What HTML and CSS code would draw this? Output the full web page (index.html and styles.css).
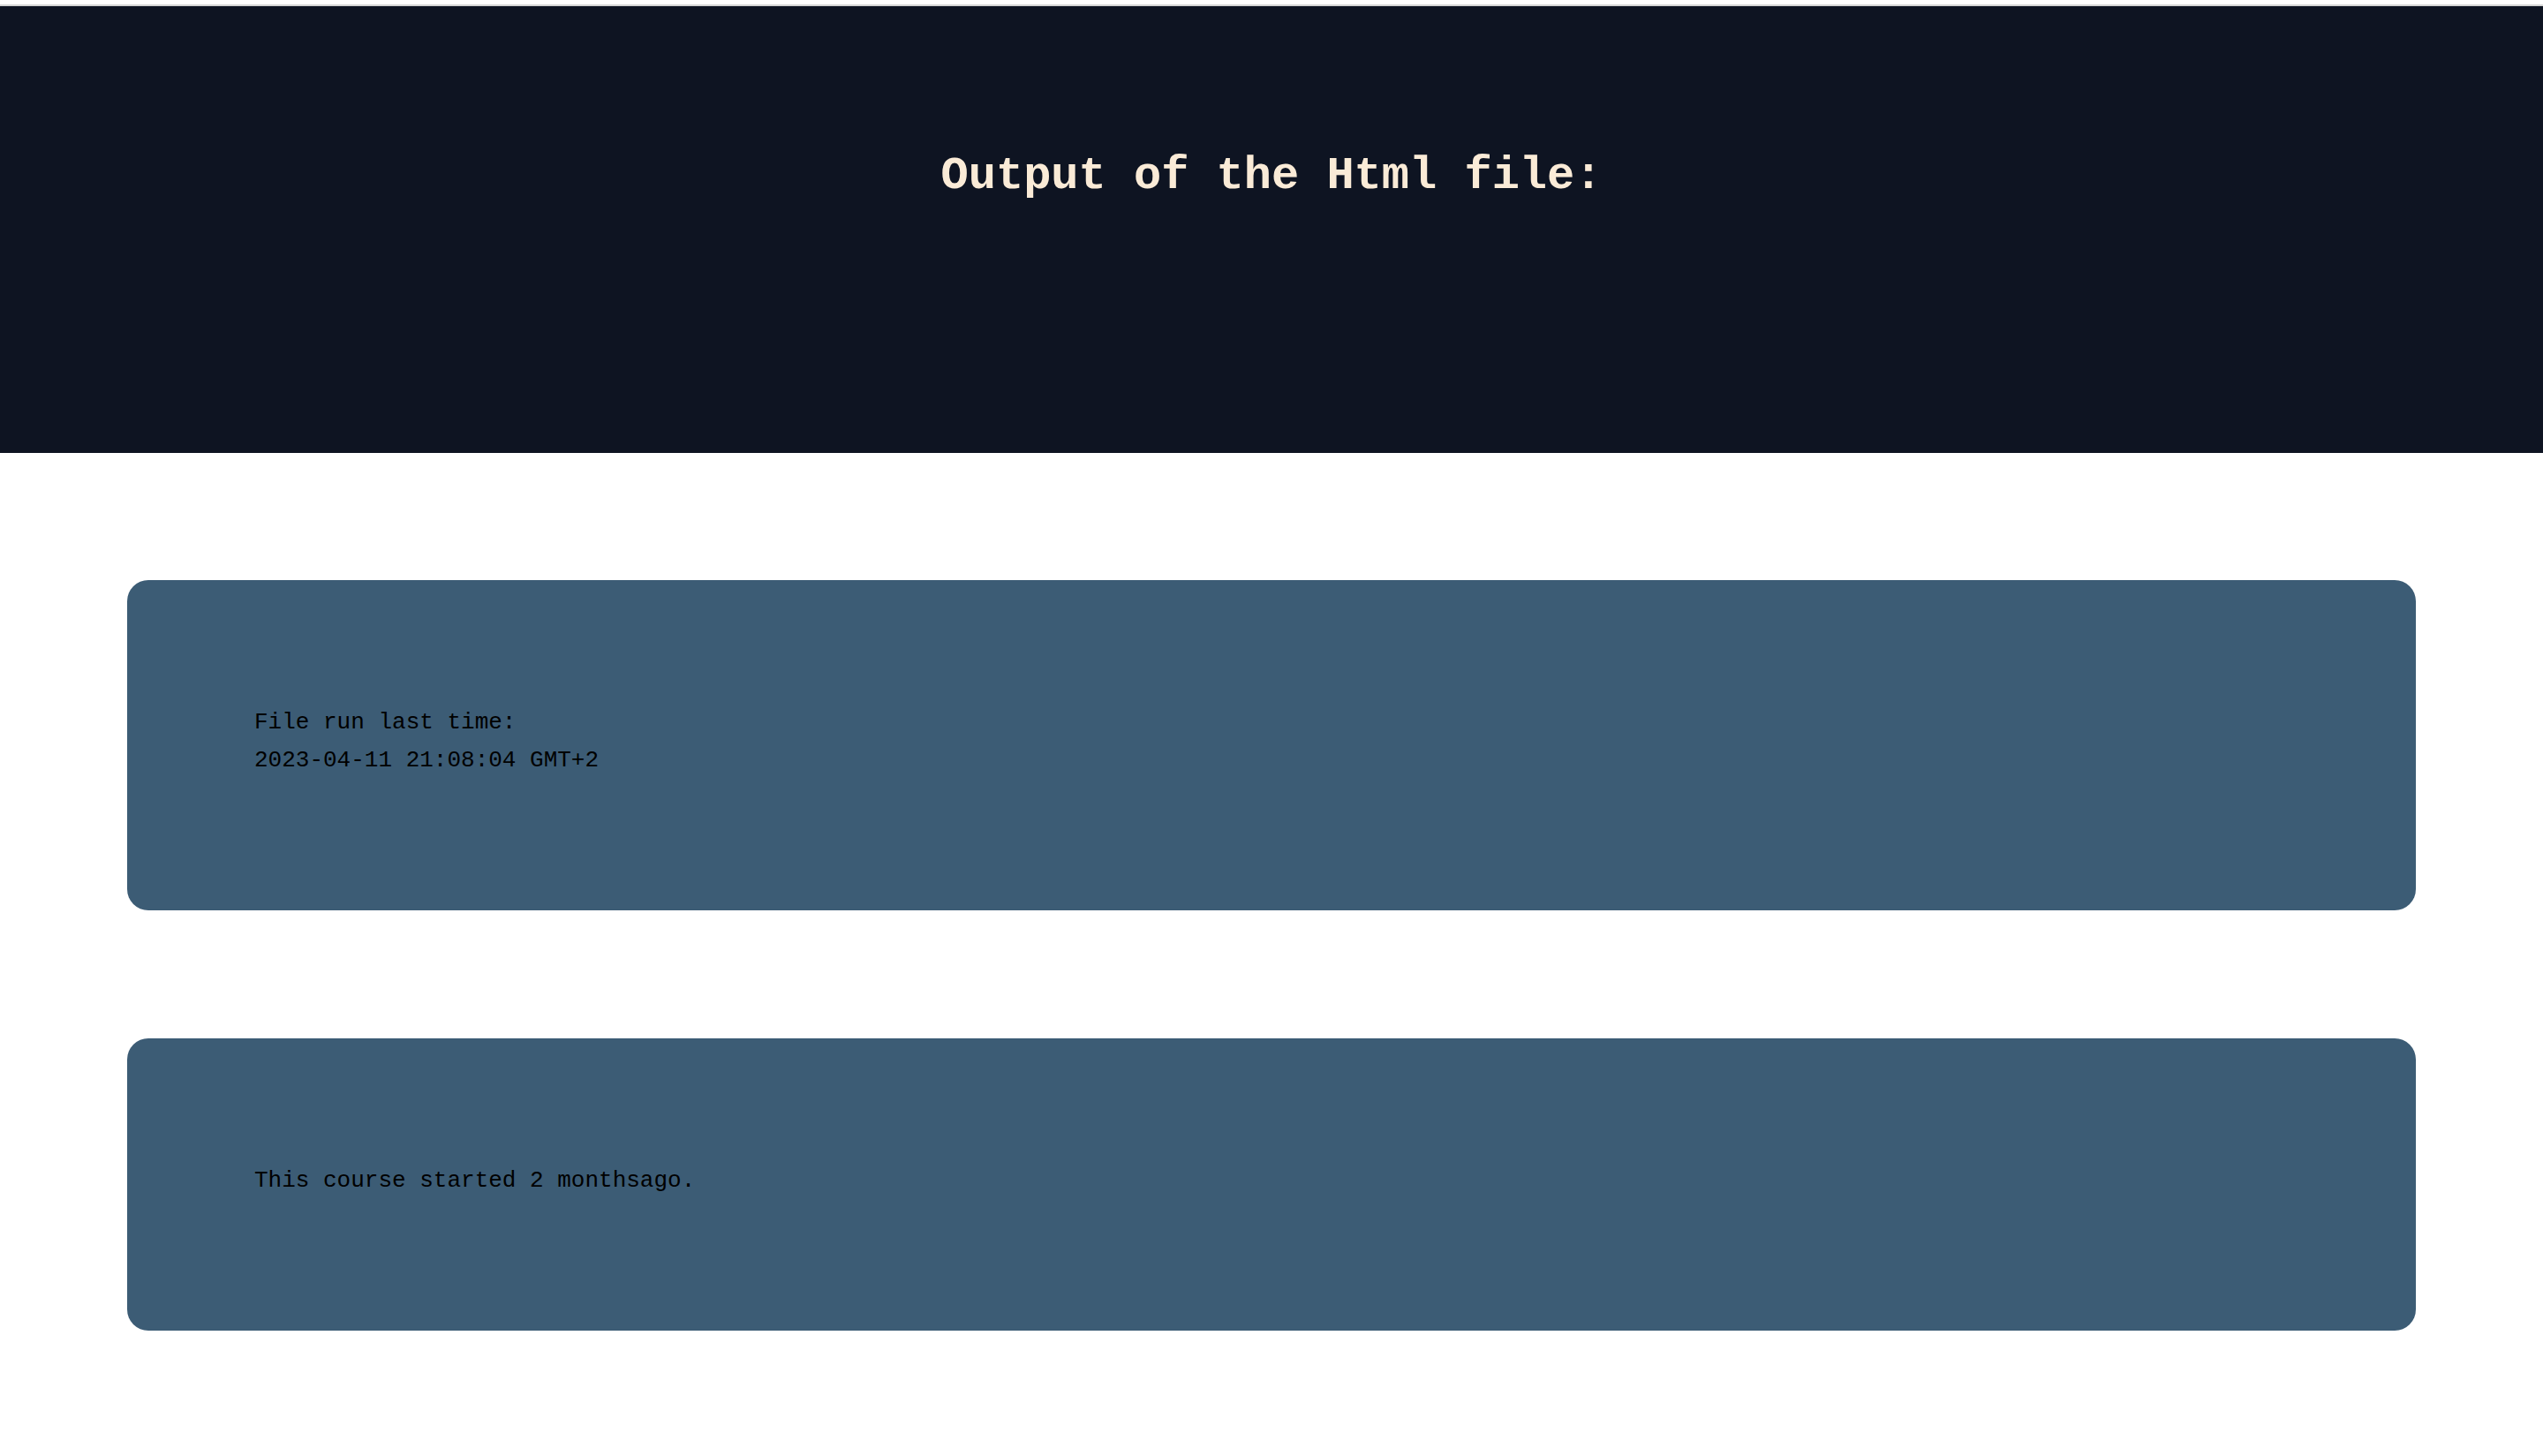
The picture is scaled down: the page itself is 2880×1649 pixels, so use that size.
FILE: index.html
```html
<!DOCTYPE html>
<html lang="en">
<head>
<meta charset="utf-8">
<title>Output of the Html file</title>
<link rel="stylesheet" href="styles.css">
</head>
<body>
  <header class="hero">
    <h1 class="hero-title">Output of the Html file:</h1>
  </header>
  <main class="content">
    <section class="card">
      <p class="card-line">File run last time:</p>
      <p class="card-line">2023-04-11 21:08:04 GMT+2</p>
    </section>
    <section class="card">
      <p class="card-line">This course started 2 monthsago.</p>
    </section>
  </main>
</body>
</html>
```

FILE: styles.css
```css
html, body {
  margin: 0;
  padding: 0;
  background: #ffffff;
}

body {
  padding-top: 5px;
  font-family: "Liberation Mono", "Courier New", monospace;
}

.hero {
  background: #0e1422;
  border-top: 2px solid #d5d5d5;
  height: 508px;
  box-sizing: border-box;
  padding-top: 164px;
}

.hero-title {
  margin: 0;
  text-align: center;
  font-family: "Liberation Mono", "Courier New", monospace;
  font-weight: 700;
  font-size: 52px;
  line-height: 1.133;
  color: #faebd7;
}

.content {
  display: flex;
  flex-direction: column;
  gap: 145px;
  padding: 144px 144px 0;
}

.card {
  background: #3c5c75;
  border-radius: 24px;
  padding: 140px 144px 148px;
}

.card-line {
  margin: 0;
  font-size: 26px;
  line-height: 43px;
  color: #000000;
}
```
